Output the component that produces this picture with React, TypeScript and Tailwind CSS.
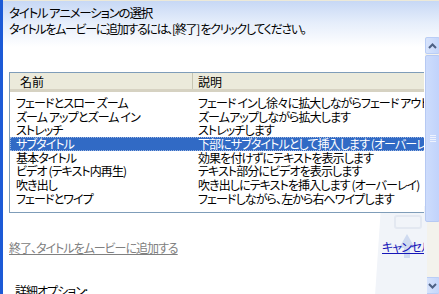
import React from "react";

const rows = [
  ["フェードとスロー ズーム", "フェード インし徐々に拡大しながらフェード アウトします"],
  ["ズーム アップとズーム イン", "ズームアップしながら拡大します"],
  ["ストレッチ", "ストレッチします"],
  ["サブタイトル", "下部にサブタイトルとして挿入します (オーバーレイ)"],
  ["基本タイトル", "効果を付けずにテキストを表示します"],
  ["ビデオ (テキスト内再生)", "テキスト部分にビデオを表示します"],
  ["吹き出し", "吹き出しにテキストを挿入します (オーバーレイ)"],
  ["フェードとワイプ", "フェードしながら、左から右へワイプします"],
];

const SELECTED = 3;

function ArrowButton({ dir }: { dir: "up" | "down" }) {
  return (
    <div className="h-[17px] w-full rounded-[2px] border border-[#b9cdf6] bg-[linear-gradient(to_right,#d8e4fc,#c4d6fb)] flex items-center justify-center">
      <svg width="9" height="6" viewBox="0 0 9 6">
        <path
          d={dir === "up" ? "M1 5 L4.5 1.5 L8 5" : "M1 1 L4.5 4.5 L8 1"}
          fill="none"
          stroke="#4d6185"
          strokeWidth="2"
        />
      </svg>
    </div>
  );
}

export default function App() {
  return (
    <div className="w-[439px] h-[294px] overflow-hidden flex bg-white font-['Noto_Sans_CJK_JP',sans-serif] [font-feature-settings:'palt'] text-[12px] text-black">
      {/* window edge */}
      <div className="w-[3px] bg-[#1c5ad6] shrink-0" />

      <div className="flex-1 flex border-t border-[#ece9d8] bg-[linear-gradient(to_bottom,#c7d8f5_0px,#e6eefb_22px,#ffffff_46px)] relative">
        {/* faint watermark */}
        <svg className="absolute left-[366px] top-[205px]" width="60" height="90" viewBox="0 0 60 90">
          <path d="M12 0 L58 0 L58 90 L6 90 Z" fill="#f1f4f9" />
          <rect x="26" y="10" width="26" height="12" rx="2" fill="none" stroke="#e3e8f1" strokeWidth="2" />
          <path d="M38 28 L46 42 L41 42 L41 52 L35 52 L35 42 L30 42 Z" fill="#cfdaf0" />
        </svg>

        {/* content */}
        <div className="w-[421px] shrink-0 overflow-hidden pl-[6px] relative">
          <div className="pt-[4px] text-[12.5px] leading-[16px] tracking-[-1.2px] whitespace-nowrap">タイトル アニメーションの選択</div>
          <div className="leading-[15px] tracking-[-1.3px] whitespace-nowrap">
            タイトルをムービーに追加するには、[終了] をクリックしてください。
          </div>

          {/* list view */}
          <div className="mt-[36px] w-[430px] h-[141px] border border-[#7f9db9] bg-white overflow-hidden">
            <div className="flex h-[19px] bg-[#ebeadb] border-b-[3px] border-[#d6d2c2]">
              <div className="w-[183px] pl-[10px] leading-[17px] border-r border-[#c7c5b2]">名前</div>
              <div className="pl-[5px] leading-[17px]">説明</div>
            </div>
            <div className="pt-[4px]">
              {rows.map(([name, desc], i) => (
                <div
                  key={name}
                  className={
                    i === SELECTED
                      ? "flex h-[13.7px] leading-[13.7px] bg-[#316ac5] text-white outline-1 outline-dotted outline-[#9bb5e0] -outline-offset-1 whitespace-nowrap tracking-[-0.9px]"
                      : "flex h-[13.7px] leading-[13.7px] whitespace-nowrap tracking-[-0.9px]"
                  }
                >
                  <div className="w-[183px] pl-[6px] shrink-0">{name}</div>
                  <div className="pl-[5px]">{desc}</div>
                </div>
              ))}
            </div>
          </div>

          <div className="mt-[27px] flex items-start relative">
            <span className="text-[#808080] underline tracking-[-1px] leading-[15px] whitespace-nowrap">終了、タイトルをムービーに追加する</span>
            <span className="absolute left-[373px] -top-[1px] text-[#1616b8] underline tracking-[-1px] leading-[15px] whitespace-nowrap">キャンセル</span>
          </div>

          <div className="mt-[28px] pl-[6px] leading-[15px] tracking-[-1px] whitespace-nowrap">詳細オプション:</div>
        </div>

        {/* page scrollbar */}
        <div className="w-[15px] ml-[1px] mt-[36px] flex flex-col bg-[#f3f2ec]">
          <ArrowButton dir="up" />
          <div className="flex-1 relative">
            <div className="absolute inset-x-0 top-[1px] h-[167px] rounded-[2px] border border-[#b6c9f3] bg-[linear-gradient(to_right,#cddcfc,#c1d3fb)] flex items-center justify-center">
              <div className="flex flex-col gap-[1px]">
                <div className="w-[6px] h-[1px] bg-[#eef3fe]" />
                <div className="w-[6px] h-[1px] bg-[#eef3fe]" />
                <div className="w-[6px] h-[1px] bg-[#eef3fe]" />
                <div className="w-[6px] h-[1px] bg-[#eef3fe]" />
              </div>
            </div>
          </div>
          <ArrowButton dir="down" />
        </div>
      </div>
    </div>
  );
}
